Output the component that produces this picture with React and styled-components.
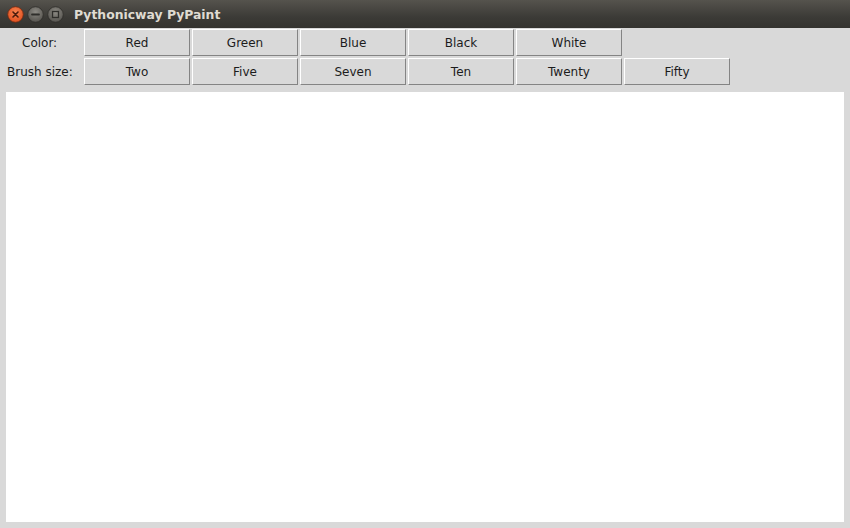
import React from 'react'
import styled, { createGlobalStyle } from 'styled-components'

const Global = createGlobalStyle`
  html, body {
    margin: 0;
    padding: 0;
    background: #d9d9d9;
  }
  body {
    width: 850px;
    height: 528px;
    overflow: hidden;
    font-family: "DejaVu Sans", "Liberation Sans", sans-serif;
  }
`

const Window = styled.div`
  width: 850px;
  height: 528px;
  display: flex;
  flex-direction: column;
  background: #d9d9d9;
`

const TitleBar = styled.div`
  height: 28px;
  flex: none;
  display: flex;
  align-items: center;
  padding-left: 7px;
  background: linear-gradient(#55534d, #3c3b37 60%, #34332f);
  box-sizing: border-box;
`

const Controls = styled.div`
  display: flex;
  gap: 3px;
  margin-right: 10px;
`

const Title = styled.div`
  color: #dfdbd2;
  font-weight: bold;
  font-size: 12.4px;
  padding-top: 1px;
`

const Toolbar = styled.div`
  display: grid;
  grid-template-columns: 82px repeat(6, 106px);
  grid-auto-rows: 27px;
  column-gap: 2px;
  row-gap: 2px;
  padding-top: 1px;
`

const Label = styled.div`
  font-size: 12px;
  color: #1c1c1c;
  display: flex;
  align-items: center;
  padding-left: ${p => p.$indent}px;
  padding-top: 1px;
`

const Button = styled.button`
  box-sizing: border-box;
  margin: 0;
  padding: 1px 0 0;
  font-family: "DejaVu Sans", "Liberation Sans", sans-serif;
  font-size: 12px;
  color: #1c1c1c;
  background: #d9d9d9;
  border: 1px solid;
  border-color: #ffffff #848484 #848484 #ffffff;
  outline: none;
`

const Canvas = styled.div`
  margin: 7px 6px 6px 6px;
  flex: 1;
  background: #ffffff;
`

const WinButton = ({ kind }) => {
  const close = kind === 'close'
  return (
    <svg width="17" height="17" viewBox="0 0 17 17">
      <defs>
        <radialGradient id={`g-${kind}`} cx="50%" cy="35%" r="65%">
          <stop offset="0%" stopColor={close ? '#f6824f' : '#8c8a84'} />
          <stop offset="100%" stopColor={close ? '#e0501f' : '#55534e'} />
        </radialGradient>
      </defs>
      <circle cx="8.5" cy="8.5" r="7.8" fill={`url(#g-${kind})`} stroke={close ? '#6e2a12' : '#2e2d2a'} strokeWidth="0.8" />
      {kind === 'close' && (
        <path d="M6 6 L11 11 M11 6 L6 11" stroke="#4a1c0c" strokeWidth="1.6" strokeLinecap="round" />
      )}
      {kind === 'min' && (
        <path d="M5 8.5 H12" stroke="#2f2e2b" strokeWidth="1.8" strokeLinecap="round" />
      )}
      {kind === 'max' && (
        <rect x="5.5" y="5.5" width="6" height="6" fill="none" stroke="#2f2e2b" strokeWidth="1.3" />
      )}
    </svg>
  )
}

const colors = ['Red', 'Green', 'Blue', 'Black', 'White']
const sizes = ['Two', 'Five', 'Seven', 'Ten', 'Twenty', 'Fifty']

export default function App() {
  return (
    <Window>
      <Global />
      <TitleBar>
        <Controls>
          <WinButton kind="close" />
          <WinButton kind="min" />
          <WinButton kind="max" />
        </Controls>
        <Title>Pythonicway PyPaint</Title>
      </TitleBar>
      <Toolbar>
        <Label $indent={22}>Color:</Label>
        {colors.map(c => <Button key={c}>{c}</Button>)}
        <div />
        <Label $indent={7}>Brush size:</Label>
        {sizes.map(s => <Button key={s}>{s}</Button>)}
      </Toolbar>
      <Canvas />
    </Window>
  )
}
